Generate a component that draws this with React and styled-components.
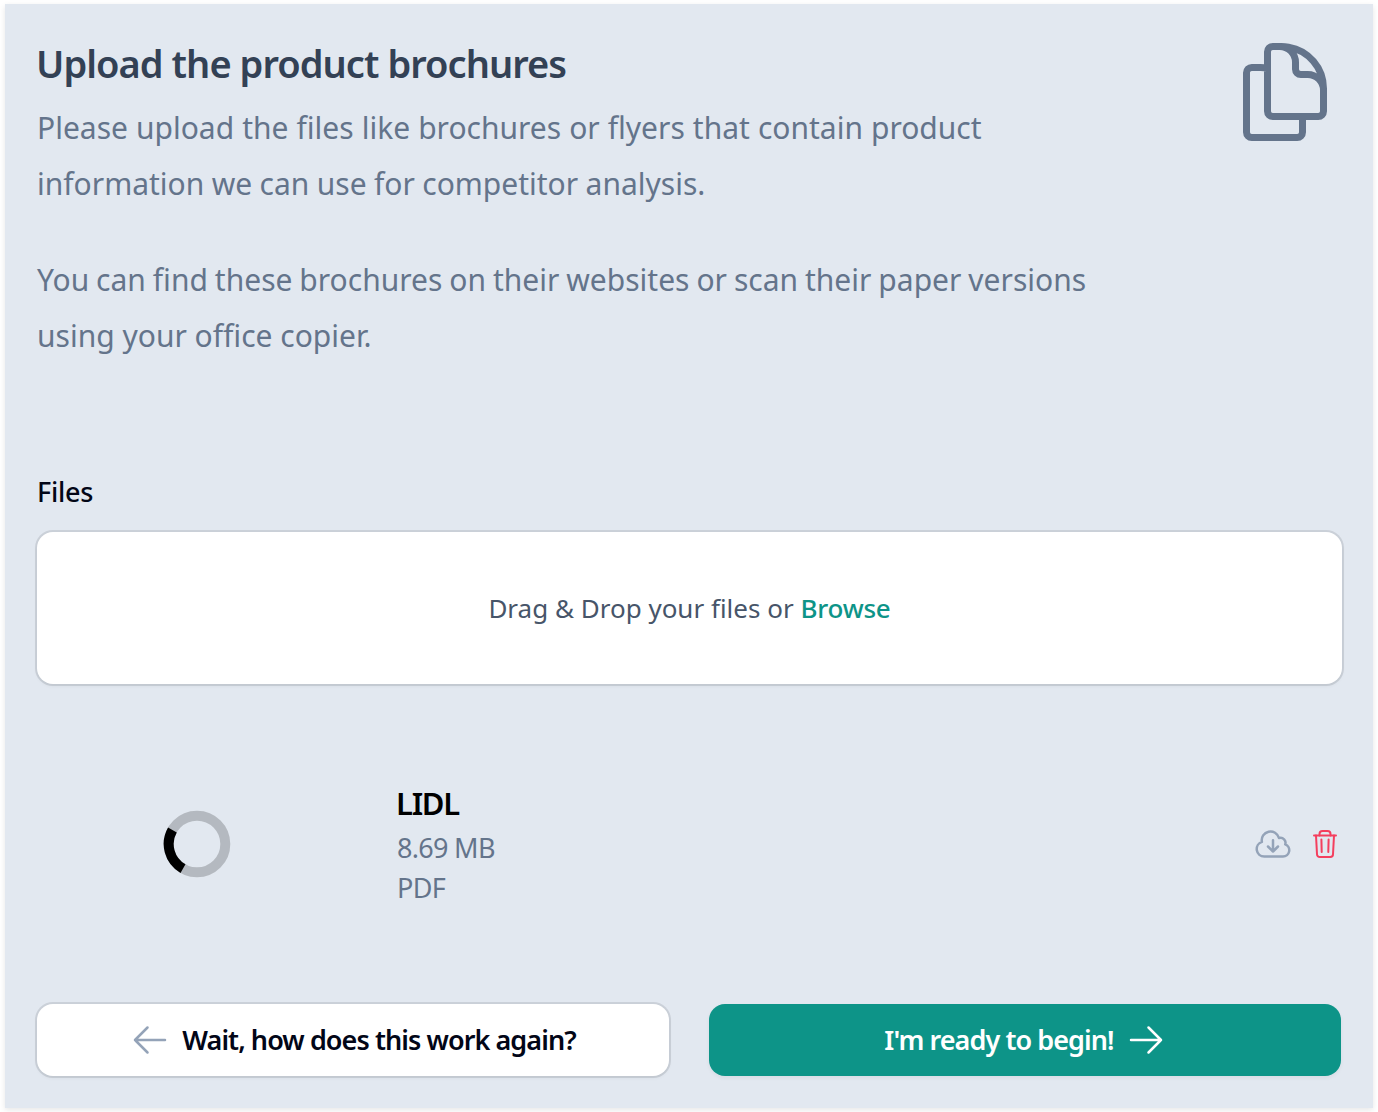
import React from 'react';
import styled, { createGlobalStyle } from 'styled-components';
import {
  HiOutlineArrowLeft,
  HiOutlineArrowRight,
  HiOutlineCloudArrowDown,
  HiOutlineDocumentDuplicate,
} from 'react-icons/hi2';

const GlobalStyle = createGlobalStyle`
  *, *::before, *::after { box-sizing: border-box; }
  body {
    margin: 0;
    background: #fff;
    color: #020617;
    font-family: "Noto Sans", "Open Sans", sans-serif;
  }
`;

const Page = styled.div`
  height: 1112px;
  padding: 4px 5px;
  overflow: hidden;
`;

const Card = styled.main`
  display: flex;
  flex-direction: column;
  height: 1104px;
  padding: 32px;
  background: #e2e8f0;
  box-shadow: 0 2px 6px rgba(0, 0, 0, 0.1);
`;

const Header = styled.header`
  display: flex;
  justify-content: space-between;
  align-items: flex-start;
  height: 432px;

  > svg {
    flex: none;
    color: #64748b;
  }
`;

const Intro = styled.div`
  display: flex;
  flex-direction: column;
`;

const Title = styled.h1`
  margin: 0 0 10px -1px;
  font-size: 38px;
  font-weight: 600;
  line-height: 54px;
  letter-spacing: -0.95px;
  color: #334155;
`;

const Paragraph = styled.p`
  margin: 0 0 40px;
  font-size: 30px;
  line-height: 56px;
  color: #64748b;
`;

const Line = styled.span`
  display: block;
  white-space: nowrap;
  word-spacing: ${(p) => p.$gap || 'normal'};
`;

const Label = styled.label`
  display: block;
  height: 64px;
  font-size: 27px;
  font-weight: 500;
  line-height: 48px;
  letter-spacing: -0.25px;
`;

const Dropzone = styled.div`
  display: flex;
  align-items: center;
  justify-content: center;
  height: 152px;
  margin-right: -1px;
  padding-bottom: 1px;
  border-radius: 16px;
  background: #fff;
  box-shadow: 0 0 0 2px rgba(2, 6, 23, 0.1), 0 2px 4px rgba(0, 0, 0, 0.05);
  font-size: 26px;
  color: #475569;
  white-space: pre;
`;

const Browse = styled.span`
  font-weight: 500;
  letter-spacing: -0.2px;
  color: #0d9488;
`;

const FileRow = styled.section`
  display: grid;
  grid-template-columns: 320px 1fr auto;
  column-gap: 40px;
  align-items: center;
  height: 320px;
`;

const Preview = styled.div`
  display: flex;
  justify-content: center;
`;

const FileInfo = styled.div`
  display: flex;
  flex-direction: column;
`;

const FileName = styled.div`
  margin: 0 0 2px -1px;
  font-size: 31px;
  font-weight: 600;
  line-height: 46px;
  letter-spacing: -1.3px;
  color: #000;
`;

const FileMeta = styled.div`
  font-size: 27px;
  line-height: 40px;
  letter-spacing: -0.7px;
  color: #64748b;
`;

const Actions = styled.div`
  display: flex;
  align-items: center;
  gap: 12px;
  margin-right: -4px;
`;

const IconButton = styled.button`
  display: flex;
  padding: 0;
  border: 0;
  background: none;
  color: ${(p) => p.$color};
`;

const Footer = styled.footer`
  display: grid;
  grid-template-columns: 1fr 1fr;
  gap: 40px;
`;

const Button = styled.button`
  display: flex;
  align-items: center;
  justify-content: center;
  gap: 12px;
  height: 72px;
  padding: 0;
  border: 0;
  border-radius: 16px;
  background: ${(p) => (p.$primary ? '#0d9488' : '#fff')};
  box-shadow: ${(p) => (p.$primary ? '' : '0 0 0 2px rgba(2, 6, 23, 0.1), ')}0 2px 4px rgba(0, 0, 0, 0.05);
  color: ${(p) => (p.$primary ? '#fff' : '#020617')};
  font-family: inherit;
  font-size: 27px;
  font-weight: 600;
  letter-spacing: -0.93px;
  white-space: nowrap;

  svg {
    color: ${(p) => (p.$primary ? '#fff' : '#94a3b8')};
  }
`;

const ButtonText = styled.span`
  padding-bottom: 2px;
`;

function Spinner() {
  return (
    <svg width="68" height="68" viewBox="0 0 68 68" fill="none" strokeWidth="10">
      <circle cx="34" cy="34" r="28.3" stroke="#000" strokeOpacity="0.2" />
      <path d="M9.4 20 A28.3 28.3 0 0 0 20 58.6" stroke="#000" />
    </svg>
  );
}

function TrashIcon() {
  return (
    <svg
      width="40"
      height="40"
      viewBox="0 0 40 40"
      fill="none"
      stroke="currentColor"
      strokeWidth="2"
      strokeLinecap="round"
      strokeLinejoin="round"
    >
      <path d="M9 11.5h22" />
      <path d="M14.5 11.5V10a3 3 0 0 1 3-3h5a3 3 0 0 1 3 3v1.5" />
      <path d="M11 11.5l1 18.7a2.8 2.8 0 0 0 2.8 2.8h10.4a2.8 2.8 0 0 0 2.8-2.8l1-18.7" />
      <path d="M16.4 15.5l.3 12.5M23.6 15.5l-.3 12.5" />
    </svg>
  );
}

export default function App() {
  return (
    <Page>
      <GlobalStyle />
      <Card>
        <Header>
          <Intro>
            <Title>Upload the product brochures</Title>
            <Paragraph>
              <Line $gap="0.25px">Please upload the files like brochures or flyers that contain product</Line>
              <Line $gap="-0.4px">information we can use for competitor analysis.</Line>
            </Paragraph>
            <Paragraph>
              <Line $gap="-0.85px">You can find these brochures on their websites or scan their paper versions</Line>
              <Line>using your office copier.</Line>
            </Paragraph>
          </Intro>
          <HiOutlineDocumentDuplicate size={112} />
        </Header>
        <Label>Files</Label>
        <Dropzone>
          Drag &amp; Drop your files or <Browse>Browse</Browse>
        </Dropzone>
        <FileRow>
          <Preview>
            <Spinner />
          </Preview>
          <FileInfo>
            <FileName>LIDL</FileName>
            <FileMeta>8.69 MB</FileMeta>
            <FileMeta>PDF</FileMeta>
          </FileInfo>
          <Actions>
            <IconButton $color="#94a3b8" aria-label="Download">
              <HiOutlineCloudArrowDown size={40} />
            </IconButton>
            <IconButton $color="#f43f5e" aria-label="Delete">
              <TrashIcon />
            </IconButton>
          </Actions>
        </FileRow>
        <Footer>
          <Button>
            <HiOutlineArrowLeft size={40} />
            <ButtonText>Wait, how does this work again?</ButtonText>
          </Button>
          <Button $primary>
            <ButtonText>I'm ready to begin!</ButtonText>
            <HiOutlineArrowRight size={40} />
          </Button>
        </Footer>
      </Card>
    </Page>
  );
}
